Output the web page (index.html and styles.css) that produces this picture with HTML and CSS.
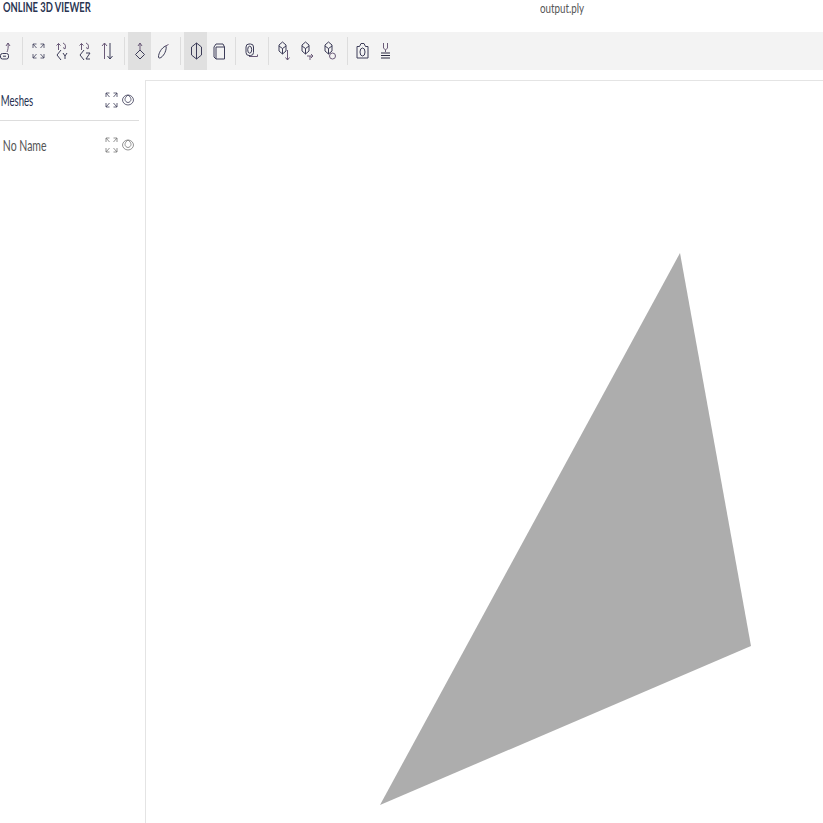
FILE: index.html
```html
<!DOCTYPE html>
<html lang="en">

<head>
    <meta charset="UTF-8">
    <meta name="viewport" content="width=device-width, initial-scale=1.0">
    <title>Online 3D Viewer</title>
    <link rel="stylesheet" href="styles.css">
</head>

<body>
    <svg class="defs" width="0" height="0" aria-hidden="true">
        <symbol id="i-fit" viewBox="0 0 16 20">
            <path d="M3 7V3h3.500M3 3l3.500 4M14 7V3h-3.500M14 3l-3.500 4M3 13v4h3.500M3 17l3.500-4M14 13v4h-3.500M14 17l-3.500-4" />
        </symbol>
        <symbol id="i-eye" viewBox="0 0 16 20">
            <path d="M8 5c3 0 5.500 2.500 5.500 5S11 15 8 15s-5.500-2.500-5.500-5S5 5 8 5z" />
            <path d="M8 5c-2 1.500-3 3-3 4.500s1.500 3 3 3 3-1.500 3-3S10 6.500 8 5z" />
        </symbol>
    </svg>

    <header class="header">
        <div class="header__logo"><span>ONLINE 3D VIEWER</span></div>
        <div class="header__file"><span>output.ply</span></div>
    </header>

    <div class="toolbar">
        <div class="toolbar__item">
            <svg class="icon" viewBox="0 0 16 20">
                <path class="accent" d="M11 2L9 5M11 2l2 3M11 2c.5 4 0 7-1 9" />
                <rect x="3.500" y="12.500" width="8" height="5.500" rx="2" />
                <path d="M6 15.200h3" />
            </svg>
        </div>
        <div class="toolbar__sep"></div>
        <div class="toolbar__item"><svg class="icon icon--thin"><use href="#i-fit" /></svg></div>
        <div class="toolbar__item">
            <svg class="icon" viewBox="0 0 16 20">
                <path class="accent" d="M5.500 9V2.500l-2 2M5.500 2.500l2 2M10 2c2.500 1 3 3 2 6M12 8l-2-1.500" />
                <path d="M8 9l-4 5 4 5M10 12l2 3 2-3M12 15v3" />
            </svg>
        </div>
        <div class="toolbar__item">
            <svg class="icon" viewBox="0 0 16 20">
                <path class="accent" d="M5.500 9V2.500l-2 2M5.500 2.500l2 2M10 2c2.500 1 3 3 2 6M12 8l-2-1.500" />
                <path d="M8 9l-4 5 4 5M10 12h4l-4 6h4" />
            </svg>
        </div>
        <div class="toolbar__item">
            <svg class="icon" viewBox="0 0 16 20">
                <path class="accent" d="M5.500 18V2M3 5l2.500-3L8 5" />
                <path d="M11 2v16M8.500 15l2.500 3 2.500-3" />
            </svg>
        </div>
        <div class="toolbar__sep"></div>
        <div class="toolbar__item toolbar__item--active">
            <svg class="icon" viewBox="0 0 16 20">
                <path class="accent" d="M8 2v7M6 5l2-3 2 3" />
                <path d="M8 9l4.500 4.500L8 18l-4.500-4.500z" />
            </svg>
        </div>
        <div class="toolbar__item">
            <svg class="icon" viewBox="0 0 16 20">
                <path d="M3.500 16c0-4 3-9 7-11 1.500 0 .5 6-2 9-2 3-5 4-5 2z" />
                <path class="accent" d="M10.500 5l3-1.500" />
            </svg>
        </div>
        <div class="toolbar__sep"></div>
        <div class="toolbar__item toolbar__item--active">
            <svg class="icon" viewBox="0 0 16 20">
                <path d="M8.500 2l5 4v8l-5 4-5-4V6zM8.500 2v16" />
            </svg>
        </div>
        <div class="toolbar__item">
            <svg class="icon" viewBox="0 0 16 20">
                <path d="M3 6l2-3h7l1.500 3v12H5l-2-2zM5 6h8.500M5 6v12" />
            </svg>
        </div>
        <div class="toolbar__sep toolbar__sep--tight"></div>
        <div class="toolbar__item">
            <svg class="icon" viewBox="0 0 16 20">
                <rect x="3" y="3" width="7.500" height="11.500" rx="3" />
                <ellipse cx="6.700" cy="8.700" rx="2" ry="3.500" />
                <path class="accent" d="M6 15.500h8.500v-2" />
            </svg>
        </div>
        <div class="toolbar__sep"></div>
        <div class="toolbar__item">
            <svg class="icon" viewBox="0 0 16 20">
                <path d="M3 4l3.500-3L10 4v6l-3.500 3L3 10zM3 5l3.500 2.500L10 5M6.500 7.500V13" />
                <path class="accent" d="M11.500 9v10M9.500 16.500l2 2.500 2-2.500" />
            </svg>
        </div>
        <div class="toolbar__item">
            <svg class="icon" viewBox="0 0 16 20">
                <path d="M3 4l3.500-3L10 4v6l-3.500 3L3 10zM3 5l3.500 2.500L10 5M6.500 7.500V13" />
                <path class="accent" d="M8 15h6M12 13l2 2-2 2M11 15v4" />
            </svg>
        </div>
        <div class="toolbar__item">
            <svg class="icon" viewBox="0 0 16 20">
                <path d="M3 4l3.500-3L10 4v6l-3.500 3L3 10zM3 5l3.500 2.500L10 5M6.500 7.500V13" />
                <circle class="accent" cx="10.500" cy="15" r="3" />
            </svg>
        </div>
        <div class="toolbar__sep"></div>
        <div class="toolbar__item">
            <svg class="icon" viewBox="0 0 16 20">
                <path d="M2 5.500h2.500l1.500-3h3l1.500 3H13V17H2z" />
                <ellipse cx="7.500" cy="11" rx="2.500" ry="4" />
            </svg>
        </div>
        <div class="toolbar__item">
            <svg class="icon" viewBox="0 0 16 20">
                <path class="accent" d="M5.500 2v5l2 2 2-2V2M7.500 9v2" />
                <path class="heavy" d="M3 12h9M3 14.500h9M3 17h9" />
            </svg>
        </div>
    </div>

    <main class="main">
        <aside class="sidebar">
            <div class="sidebar__title">
                <span class="sidebar__name">Meshes</span>
                <svg class="icon icon--thin"><use href="#i-fit" /></svg>
                <svg class="icon icon--thin"><use href="#i-eye" /></svg>
            </div>
            <div class="sidebar__row">
                <span class="sidebar__name sidebar__name--mesh">No Name</span>
                <svg class="icon icon--thin icon--light"><use href="#i-fit" /></svg>
                <svg class="icon icon--thin icon--light"><use href="#i-eye" /></svg>
            </div>
        </aside>
        <div class="viewer">
            <svg class="viewer__canvas" viewBox="0 0 677 742">
                <polygon points="534,172 605,565 234,724" fill="#adadad" />
            </svg>
        </div>
    </main>
</body>

</html>
```
FILE: styles.css
```css
*,
*::after,
*::before {
    padding: 0;
    margin: 0;
    box-sizing: border-box;
}

html,
body {
    height: 100%;
}

body {
    display: flex;
    flex-direction: column;
    overflow: hidden;
    background: #fff;
    font-family: Lato, "Open Sans", sans-serif;
}

.defs {
    position: absolute;
}

.header {
    display: flex;
    flex: none;
    height: 32px;
    padding-left: 3px;
    line-height: 15px;
}

.header span,
.sidebar__name {
    display: inline-block;
    white-space: nowrap;
    transform-origin: left center;
}

.header__logo {
    width: 537px;
    font-size: 13px;
    font-weight: 700;
    color: #2a3552;
}

.header__logo span {
    transform: scaleX(.72);
}

.header__file {
    font-size: 14px;
    color: #555;
}

.header__file span {
    transform: scaleX(.7);
}

.toolbar {
    display: flex;
    flex: none;
    align-items: center;
    height: 38px;
    background: #f3f3f3;
}

.toolbar__item {
    display: flex;
    flex: none;
    align-items: center;
    justify-content: center;
    width: 23px;
    height: 38px;
}

.toolbar__item:first-child {
    margin-left: -7px;
}

.toolbar__item--active {
    background: #e0e0e0;
}

.toolbar__sep {
    flex: none;
    width: 1px;
    height: 28px;
    margin: 0 3px 0 6px;
    background: #ddd;
}

.toolbar__sep--tight {
    margin-left: 5px;
}

.icon {
    display: block;
    flex: none;
    width: 16px;
    height: 20px;
    fill: none;
    stroke: #3c3c58;
    stroke-width: 1;
}

.icon .accent {
    stroke: #6a5a78;
}

.icon .heavy {
    stroke: #2a2a40;
    stroke-width: 1.200;
}

.icon--thin {
    stroke-width: .8;
}

.icon--light {
    stroke: #777;
}

.main {
    display: flex;
    flex: 1;
    min-height: 0;
    margin-top: 10px;
}

.sidebar {
    flex: none;
    width: 146px;
    padding-right: 6px;
    border-right: 1px solid #e4e4e4;
}

.sidebar__title,
.sidebar__row {
    display: flex;
    align-items: center;
    gap: 1px;
    padding-right: 3px;
}

.sidebar__title {
    height: 41px;
    border-bottom: 1px solid #ddd;
}

.sidebar__row {
    height: 47px;
}

.sidebar__name {
    flex: 1;
    padding-left: 1px;
    font-size: 15px;
    color: #263050;
    transform: scaleX(.64);
}

.sidebar__name--mesh {
    padding-left: 4px;
    color: #555;
    transform: scaleX(.7);
}

.viewer {
    flex: 1;
    min-width: 0;
    border-top: 1px solid #e4e4e4;
}

.viewer__canvas {
    display: block;
    width: 677px;
    height: 742px;
}
```
